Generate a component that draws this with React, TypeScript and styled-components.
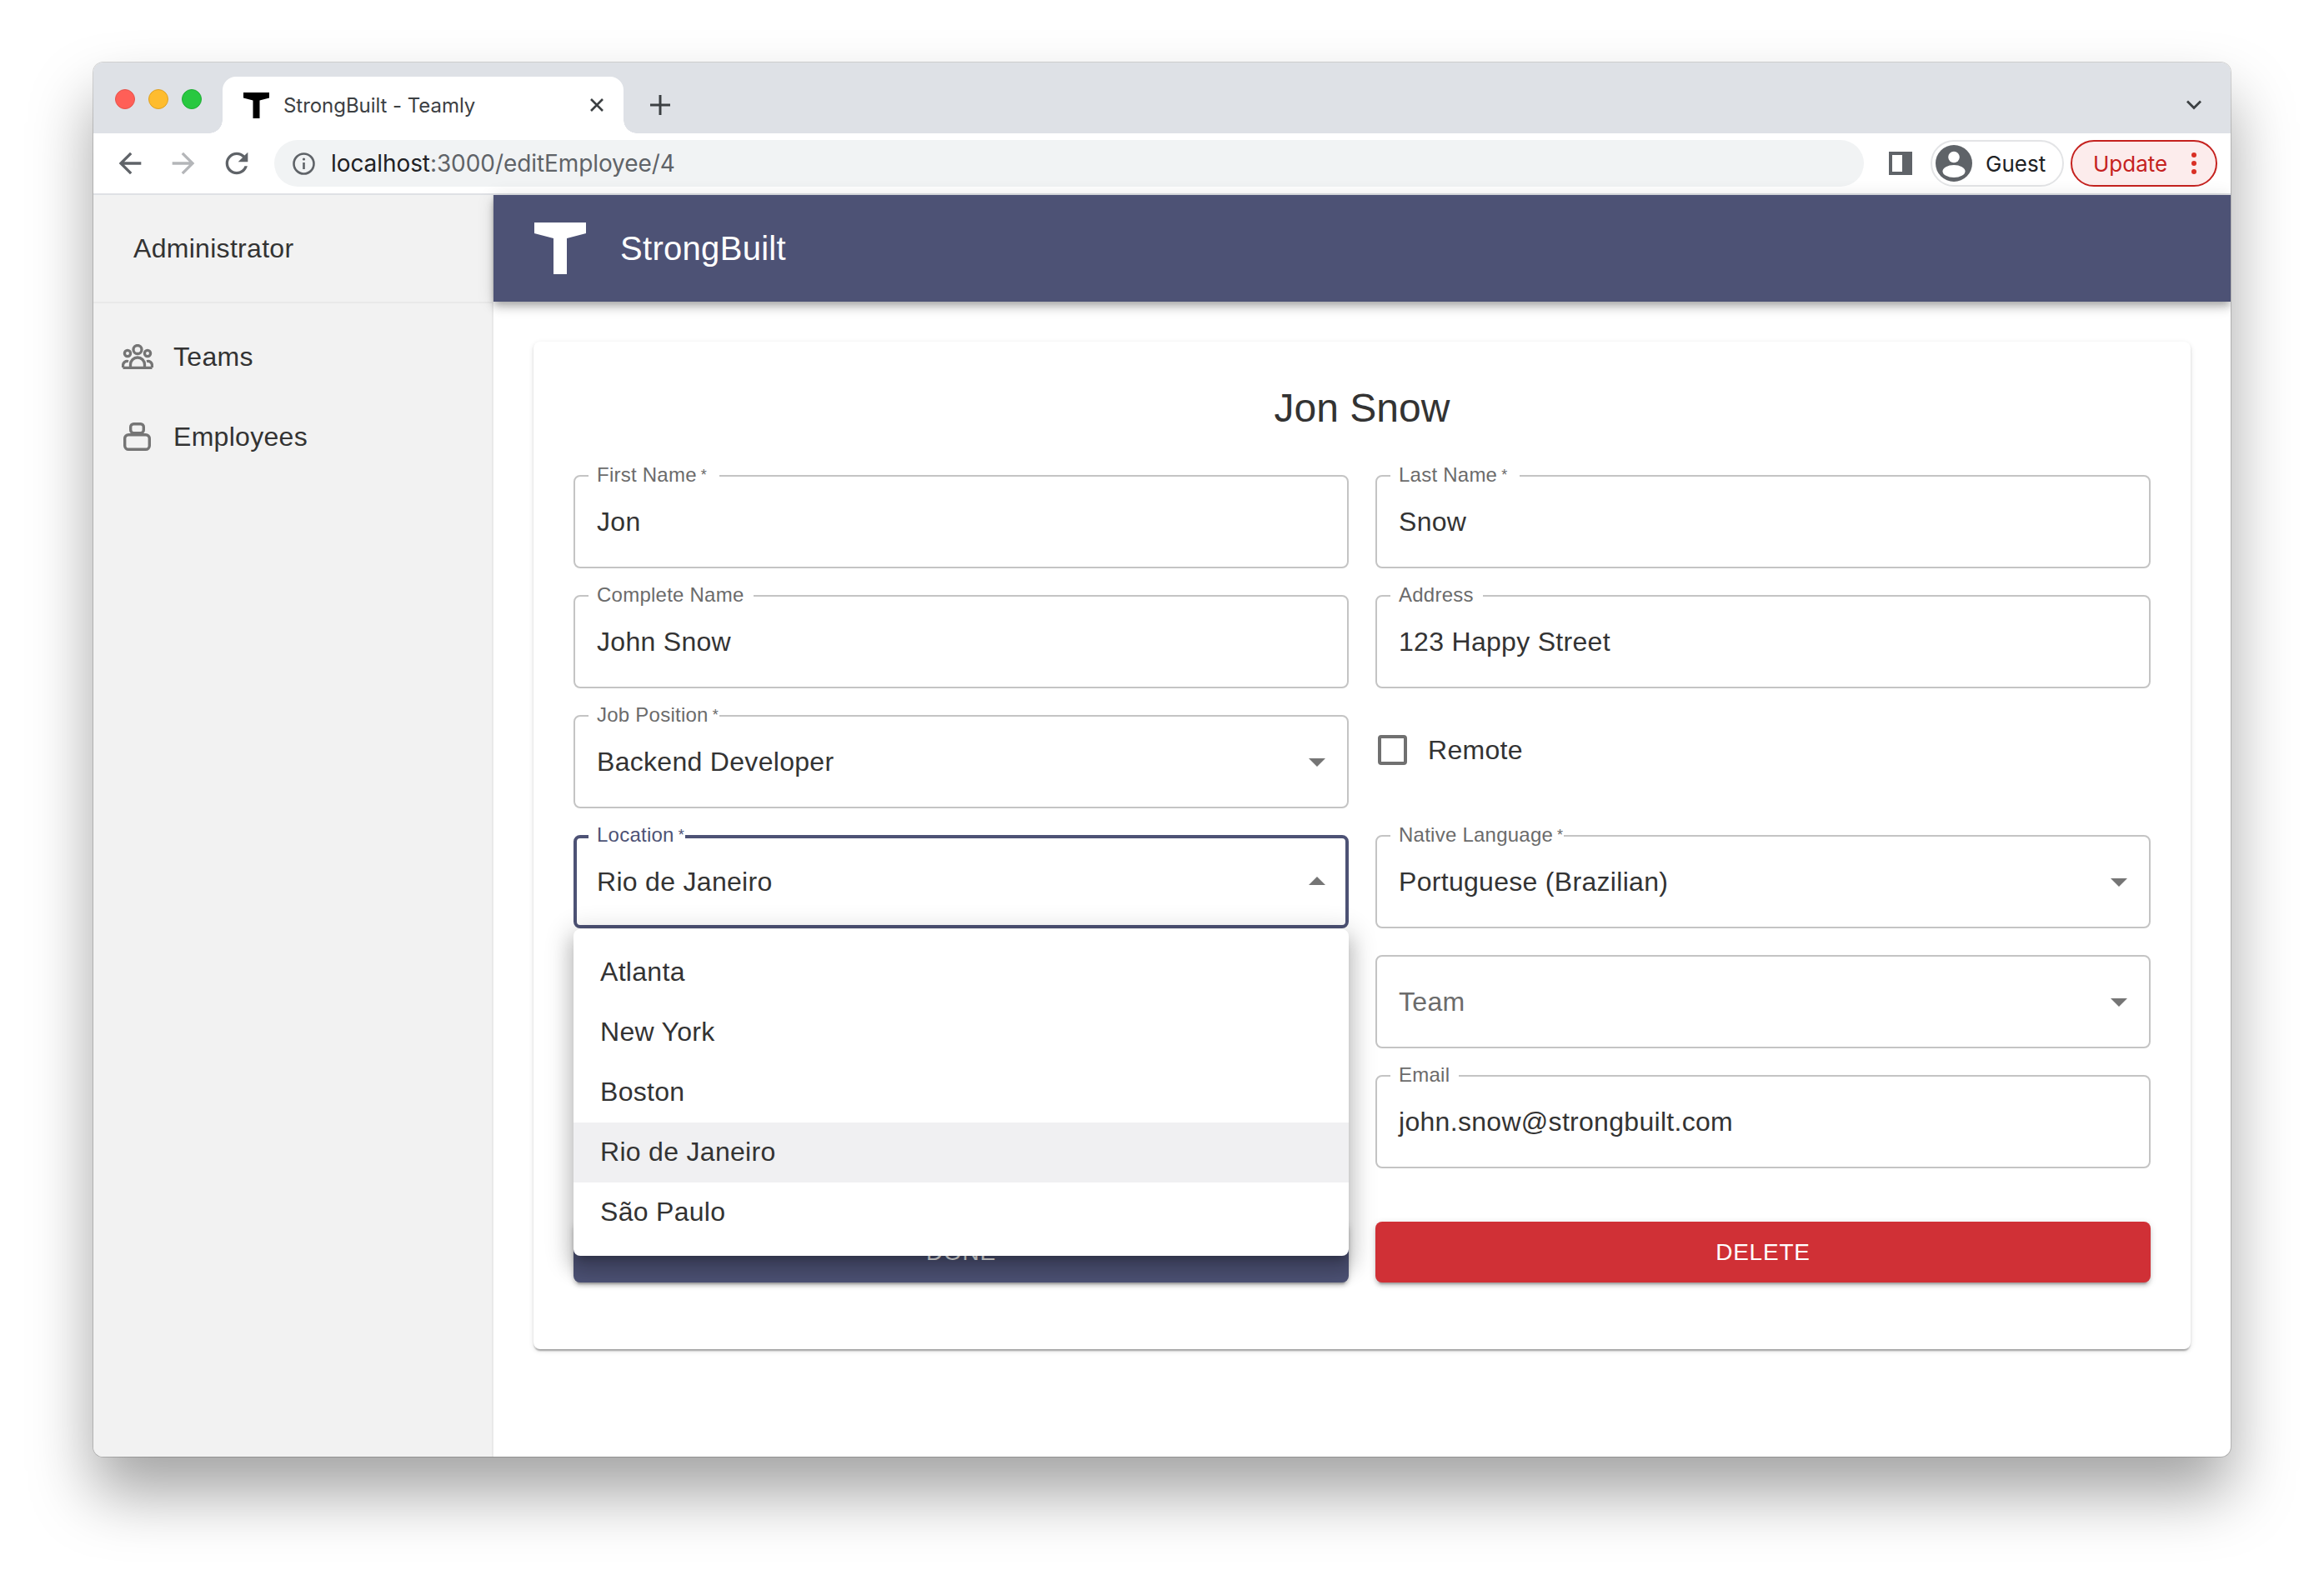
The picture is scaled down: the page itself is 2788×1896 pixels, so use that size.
import React from 'react';
import styled, { createGlobalStyle } from 'styled-components';

const primary = '#4d5275';

const GlobalStyle = createGlobalStyle`
  html, body { margin: 0; padding: 0; background: #fff; }
  body { font-family: "Liberation Sans", Arial, sans-serif; color: #333; }
  * { box-sizing: border-box; }
`;

const Page = styled.div`
  width: 2788px;
  height: 1896px;
  padding: 75px 112px 0 112px;
  overflow: hidden;
`;

const BrowserWindow = styled.div`
  height: 1673px;
  border-radius: 12px;
  overflow: hidden;
  background: #fff;
  box-shadow: 0 0 0 1px rgba(0, 0, 0, 0.16), 0 44px 76px rgba(0, 0, 0, 0.36);
  display: flex;
  flex-direction: column;
`;

/* browser chrome */
const TabStrip = styled.div`
  height: 85px;
  flex: none;
  background: #dee1e6;
  display: flex;
  align-items: flex-end;
  padding: 0 35px 0 26px;
`;

const Lights = styled.div`
  display: flex;
  gap: 16px;
  align-self: flex-start;
  margin-top: 32px;
`;

const Light = styled.span<{ $color: string; $edge: string }>`
  width: 24px;
  height: 24px;
  border-radius: 50%;
  background: ${(p) => p.$color};
  border: 1px solid ${(p) => p.$edge};
`;

const Tab = styled.div`
  position: relative;
  width: 481px;
  height: 68px;
  margin-left: 25px;
  padding: 0 24px 0 25px;
  background: #fff;
  border-radius: 16px 16px 0 0;
  display: flex;
  align-items: center;
  gap: 17px;
  &::before,
  &::after {
    content: '';
    position: absolute;
    bottom: 0;
    width: 16px;
    height: 16px;
  }
  &::before {
    left: -16px;
    background: radial-gradient(circle at 0 0, transparent 15.5px, #fff 16px);
  }
  &::after {
    right: -16px;
    background: radial-gradient(circle at 100% 0, transparent 15.5px, #fff 16px);
  }
`;

const TabTitle = styled.span`
  font-family: Inter, "Liberation Sans", sans-serif;
  font-size: 24px;
  letter-spacing: -0.05px;
  color: #3c4043;
  flex: 1;
  white-space: nowrap;
`;

const NewTab = styled.div`
  margin-left: 32px;
  height: 68px;
  display: flex;
  align-items: center;
`;

const StripEnd = styled.div`
  margin-left: auto;
  height: 68px;
  display: flex;
  align-items: center;
`;

const Toolbar = styled.div`
  height: 74px;
  flex: none;
  background: #fff;
  border-bottom: 2px solid #dfe1e5;
  padding: 8px 16px 8px 24px;
  display: flex;
  align-items: flex-start;
`;

const NavIcons = styled.div`
  display: flex;
  gap: 24px;
  height: 56px;
  align-items: center;
`;

const Omnibox = styled.div`
  flex: 1;
  height: 56px;
  margin-left: 25px;
  border-radius: 28px;
  background: #f1f3f4;
  display: flex;
  align-items: center;
  padding-left: 22px;
  gap: 19px;
  font-family: Inter, "Liberation Sans", sans-serif;
  font-size: 28px;
  letter-spacing: -0.08px;
  color: #5f6368;
`;

const Host = styled.span`
  color: #202124;
`;

const SidePanelIcon = styled.div`
  width: 28px;
  height: 28px;
  margin: 14px 22px 0 30px;
  border: solid #5f6368;
  border-width: 4px 12px 4px 4px;
`;

const Chip = styled.div<{ $update?: boolean }>`
  height: 56px;
  border-radius: 28px;
  display: flex;
  align-items: center;
  font-family: Inter, "Liberation Sans", sans-serif;
  font-size: 26px;
  border: 2px solid ${(p) => (p.$update ? '#c5221f' : '#e3e4e6')};
  background: ${(p) => (p.$update ? '#fcecec' : '#fff')};
  color: ${(p) => (p.$update ? '#c5221f' : '#202124')};
  width: ${(p) => (p.$update ? '176px' : '160px')};
  margin-left: ${(p) => (p.$update ? '8px' : '0')};
  padding-left: ${(p) => (p.$update ? '25px' : '4px')};
  gap: 16px;
`;

const MoreDots = styled.div`
  margin-left: auto;
  margin-right: 23px;
  display: flex;
  flex-direction: column;
  gap: 4px;
`;

const Dot = styled.span`
  width: 6px;
  height: 6px;
  border-radius: 50%;
  background: #d93025;
`;

/* app */
const AppBody = styled.div`
  flex: 1;
  display: flex;
  min-height: 0;
`;

const Sidebar = styled.aside`
  width: 480px;
  flex: none;
  background: #f2f2f2;
  border-right: 2px solid #e9e9e9;
`;

const SidebarHead = styled.div`
  height: 130px;
  padding-left: 48px;
  border-bottom: 2px solid #e9e9e9;
  display: flex;
  align-items: center;
  font-size: 32px;
  letter-spacing: 0.3px;
  color: #333;
`;

const NavList = styled.nav`
  padding-top: 16px;
`;

const NavItem = styled.div`
  height: 96px;
  padding-left: 32px;
  display: flex;
  align-items: center;
  gap: 23px;
  font-size: 32px;
  letter-spacing: 0.3px;
  color: #333;
`;

const NavIconSlot = styled.span`
  width: 41px;
  display: flex;
  justify-content: center;
`;

const Main = styled.main`
  flex: 1;
  min-width: 0;
  display: flex;
  flex-direction: column;
`;

const AppBar = styled.header`
  height: 128px;
  flex: none;
  background: ${primary};
  padding-left: 49px;
  display: flex;
  align-items: center;
  gap: 41px;
  color: #fff;
  font-size: 40px;
  letter-spacing: 0.3px;
  box-shadow: 0 4px 8px -2px rgba(0, 0, 0, 0.2), 0 8px 10px 0 rgba(0, 0, 0, 0.14),
    0 2px 20px 0 rgba(0, 0, 0, 0.12);
`;

const Content = styled.div`
  padding: 48px;
`;

const Card = styled.section`
  background: #fff;
  border-radius: 8px;
  padding: 48px 48px 80px;
  box-shadow: 0 4px 2px -2px rgba(0, 0, 0, 0.2), 0 2px 2px 0 rgba(0, 0, 0, 0.14),
    0 2px 6px 0 rgba(0, 0, 0, 0.12);
`;

const Title = styled.h1`
  margin: 0 0 48px;
  font-size: 48px;
  font-weight: 400;
  line-height: 64px;
  text-align: center;
  color: #333;
`;

const FormGrid = styled.div`
  display: grid;
  grid-template-columns: 1fr 1fr;
  grid-auto-rows: 112px;
  gap: 32px;
`;

const FieldWrap = styled.div<{ $column?: number }>`
  position: relative;
  ${(p) => (p.$column ? `grid-column: ${p.$column};` : '')}
`;

const FieldBox = styled.div<{ $focused?: boolean; $muted?: boolean }>`
  position: relative;
  height: 112px;
  border-radius: 8px;
  border: ${(p) => (p.$focused ? `4px solid ${primary}` : '2px solid #c4c4c4')};
  padding: 0 ${(p) => (p.$focused ? '10px 0 24px' : '12px 0 26px')};
  display: flex;
  align-items: center;
  justify-content: space-between;
  font-size: 32px;
  letter-spacing: 0.3px;
  color: ${(p) => (p.$muted ? '#6b6b6b' : '#333')};
`;

const FieldLabel = styled.label<{ $focused?: boolean; $endPad: number }>`
  position: absolute;
  top: ${(p) => (p.$focused ? '-18px' : '-16px')};
  left: ${(p) => (p.$focused ? '14px' : '16px')};
  padding: 0 ${(p) => p.$endPad}px 0 10px;
  background: #fff;
  font-size: 24px;
  line-height: 28px;
  letter-spacing: 0.24px;
  color: ${(p) => (p.$focused ? primary : '#6b6b6b')};
`;

const Asterisk = styled.span`
  margin-left: 5px;
  font-size: 18px;
  vertical-align: 2px;
`;

const Caret = styled.svg`
  width: 48px;
  height: 48px;
  flex: none;
  fill: #757575;
`;

const RemoteRow = styled.div`
  display: flex;
  align-items: center;
  gap: 25px;
  height: 36px;
  margin: 24px 0 0 3px;
  font-size: 32px;
  letter-spacing: 0.3px;
  color: #333;
`;

const CheckBox = styled.span`
  width: 35px;
  height: 36px;
  border: 4px solid #707070;
  border-radius: 4px;
`;

const ButtonRow = styled.div`
  display: grid;
  grid-template-columns: 1fr 1fr;
  gap: 32px;
  margin-top: 64px;
`;

const ActionButton = styled.button<{ $color: string }>`
  height: 73px;
  border: 0;
  border-radius: 8px;
  font-family: inherit;
  font-size: 28px;
  letter-spacing: 0.8px;
  text-transform: uppercase;
  color: #fff;
  background: ${(p) => p.$color};
  box-shadow: 0 6px 2px -4px rgba(0, 0, 0, 0.2), 0 4px 4px 0 rgba(0, 0, 0, 0.14),
    0 2px 10px 0 rgba(0, 0, 0, 0.12);
`;

const Menu = styled.ul`
  position: absolute;
  z-index: 10;
  top: 113px;
  left: 0;
  right: 0;
  margin: 0;
  padding: 16px 0;
  list-style: none;
  background: #fff;
  border-radius: 8px;
  box-shadow: 0 10px 10px -6px rgba(0, 0, 0, 0.2), 0 16px 20px 4px rgba(0, 0, 0, 0.14),
    0 6px 28px 10px rgba(0, 0, 0, 0.12);
`;

const MenuItem = styled.li<{ $selected?: boolean }>`
  height: 72px;
  padding: 0 0 2px 32px;
  display: flex;
  align-items: center;
  font-size: 32px;
  letter-spacing: 0.3px;
  color: #333;
  background: ${(p) => (p.$selected ? '#f0f0f2' : 'transparent')};
`;

const TLogo = ({ size, color }: { size: number; color: string }) => (
  <svg width={size} height={size} viewBox="0 0 62 62" style={{ flex: 'none' }}>
    <polygon fill={color} points="0,0 62,0 62,13 39,19 39,62 23,62 23,19 0,13" />
  </svg>
);

const CloseIcon = () => (
  <svg width="16" height="16" viewBox="0 0 16 16" fill="none" stroke="#3c4043" strokeWidth="2.6">
    <path d="M1 1l14 14M15 1L1 15" />
  </svg>
);

const PlusIcon = () => (
  <svg width="24" height="24" viewBox="0 0 24 24" fill="none" stroke="#3c4043" strokeWidth="3">
    <path d="M12 0v24M0 12h24" />
  </svg>
);

const ChevronIcon = () => (
  <svg width="18" height="12" viewBox="0 0 18 12" fill="none" stroke="#3c4043" strokeWidth="2.8">
    <path d="M1 1.5l8 8 8-8" />
  </svg>
);

const ToolIcon = ({ d, color }: { d: string; color: string }) => (
  <svg width="40" height="40" viewBox="0 0 24 24" fill={color}>
    <path d={d} />
  </svg>
);

const InfoIcon = () => (
  <svg width="27" height="27" viewBox="0 0 27 27" fill="none" stroke="#5f6368" style={{ flex: 'none' }}>
    <circle cx="13.5" cy="13.5" r="12" strokeWidth="2.6" />
    <path d="M13.5 12v8" strokeWidth="2.6" />
    <circle cx="13.5" cy="8" r="1.6" fill="#5f6368" stroke="none" />
  </svg>
);

const AvatarIcon = () => (
  <svg width="44" height="44" viewBox="0 0 44 44" style={{ flex: 'none' }}>
    <circle cx="22" cy="22" r="22" fill="#5f6368" />
    <circle cx="22" cy="14.5" r="6.8" fill="#fff" />
    <ellipse cx="22" cy="31.5" rx="13.5" ry="7.5" fill="#fff" />
  </svg>
);

const TeamsIcon = () => (
  <svg width="38" height="30" viewBox="0 0 38 30" fill="none" stroke="#757575" strokeWidth="3.3">
    <circle cx="19" cy="6.5" r="5" />
    <circle cx="7" cy="11" r="3.6" />
    <circle cx="31" cy="11" r="3.6" />
    <path d="M1.5 28.4h35M10.5 28v-3.5a8.5 8.5 0 0 1 17 0V28M1.5 28v-2.5a5 5 0 0 1 6.5-4.8M36.5 28v-2.5a5 5 0 0 0-6.5-4.8" />
  </svg>
);

const EmployeesIcon = () => (
  <svg width="33" height="34" viewBox="0 0 33 34" fill="none" stroke="#757575" strokeWidth="3.4">
    <rect x="8.7" y="1.7" width="15.6" height="11" rx="3.6" />
    <rect x="1.7" y="14.7" width="29.6" height="17.6" rx="4.6" />
  </svg>
);

const ArrowDrop = ({ up }: { up?: boolean }) => (
  <Caret viewBox="0 0 24 24">
    <path d={up ? 'M7 14l5-5 5 5z' : 'M7 10l5 5 5-5z'} />
  </Caret>
);

interface FieldProps {
  label?: string;
  required?: boolean;
  value: string;
  select?: boolean;
  endPad?: number;
  focused?: boolean;
  muted?: boolean;
  column?: number;
  children?: React.ReactNode;
}

const Field: React.FC<FieldProps> = ({ label, required, value, select, endPad = 11, focused, muted, column, children }) => (
  <FieldWrap $column={column}>
    <FieldBox $focused={focused} $muted={muted}>
      {label && (
        <FieldLabel $focused={focused} $endPad={endPad}>
          {label}
          {required && <Asterisk>*</Asterisk>}
        </FieldLabel>
      )}
      <span>{value}</span>
      {select && <ArrowDrop up={focused} />}
    </FieldBox>
    {children}
  </FieldWrap>
);

const cities = ['Atlanta', 'New York', 'Boston', 'Rio de Janeiro', 'São Paulo'];

const App: React.FC = () => (
  <Page>
    <GlobalStyle />
    <BrowserWindow>
      <TabStrip>
        <Lights>
          <Light $color="#ff5f57" $edge="#e5534b" />
          <Light $color="#febc2e" $edge="#dea123" />
          <Light $color="#28c840" $edge="#1fad34" />
        </Lights>
        <Tab>
          <TLogo size={31} color="#000" />
          <TabTitle>StrongBuilt - Teamly</TabTitle>
          <CloseIcon />
        </Tab>
        <NewTab>
          <PlusIcon />
        </NewTab>
        <StripEnd>
          <ChevronIcon />
        </StripEnd>
      </TabStrip>
      <Toolbar>
        <NavIcons>
          <ToolIcon color="#5f6368" d="M20 11H7.83l5.59-5.59L12 4l-8 8 8 8 1.41-1.41L7.83 13H20v-2z" />
          <ToolIcon color="#b4b6b9" d="M12 4l-1.41 1.41L16.17 11H4v2h12.17l-5.58 5.59L12 20l8-8z" />
          <ToolIcon
            color="#5f6368"
            d="M17.65 6.35C16.2 4.9 14.21 4 12 4c-4.42 0-7.99 3.58-7.99 8s3.57 8 7.99 8c3.73 0 6.84-2.55 7.73-6h-2.08c-.82 2.33-3.04 4-5.65 4-3.31 0-6-2.69-6-6s2.69-6 6-6c1.66 0 3.14.69 4.22 1.78L13 11h7V4l-2.35 2.35z"
          />
        </NavIcons>
        <Omnibox>
          <InfoIcon />
          <span>
            <Host>localhost</Host>:3000/editEmployee/4
          </span>
        </Omnibox>
        <SidePanelIcon />
        <Chip>
          <AvatarIcon />
          Guest
        </Chip>
        <Chip $update>
          Update
          <MoreDots>
            <Dot />
            <Dot />
            <Dot />
          </MoreDots>
        </Chip>
      </Toolbar>
      <AppBody>
        <Sidebar>
          <SidebarHead>Administrator</SidebarHead>
          <NavList>
            <NavItem>
              <NavIconSlot>
                <TeamsIcon />
              </NavIconSlot>
              Teams
            </NavItem>
            <NavItem>
              <NavIconSlot>
                <EmployeesIcon />
              </NavIconSlot>
              Employees
            </NavItem>
          </NavList>
        </Sidebar>
        <Main>
          <AppBar>
            <TLogo size={62} color="#fff" />
            StrongBuilt
          </AppBar>
          <Content>
            <Card>
              <Title>Jon Snow</Title>
              <FormGrid>
                <Field label="First Name" required value="Jon" endPad={15} />
                <Field label="Last Name" required value="Snow" endPad={15} />
                <Field label="Complete Name" value="John Snow" />
                <Field label="Address" value="123 Happy Street" />
                <Field label="Job Position" required value="Backend Developer" select endPad={1} />
                <RemoteRow>
                  <CheckBox />
                  Remote
                </RemoteRow>
                <Field label="Location" required value="Rio de Janeiro" select endPad={1} focused>
                  <Menu>
                    {cities.map((c) => (
                      <MenuItem key={c} $selected={c === 'Rio de Janeiro'}>
                        {c}
                      </MenuItem>
                    ))}
                  </Menu>
                </Field>
                <Field label="Native Language" required value="Portuguese (Brazilian)" select endPad={1} />
                <Field value="Team" select muted column={2} />
                <Field label="Email" value="john.snow@strongbuilt.com" column={2} />
              </FormGrid>
              <ButtonRow>
                <ActionButton $color={primary}>Done</ActionButton>
                <ActionButton $color="#d03036">Delete</ActionButton>
              </ButtonRow>
            </Card>
          </Content>
        </Main>
      </AppBody>
    </BrowserWindow>
  </Page>
);

export default App;
